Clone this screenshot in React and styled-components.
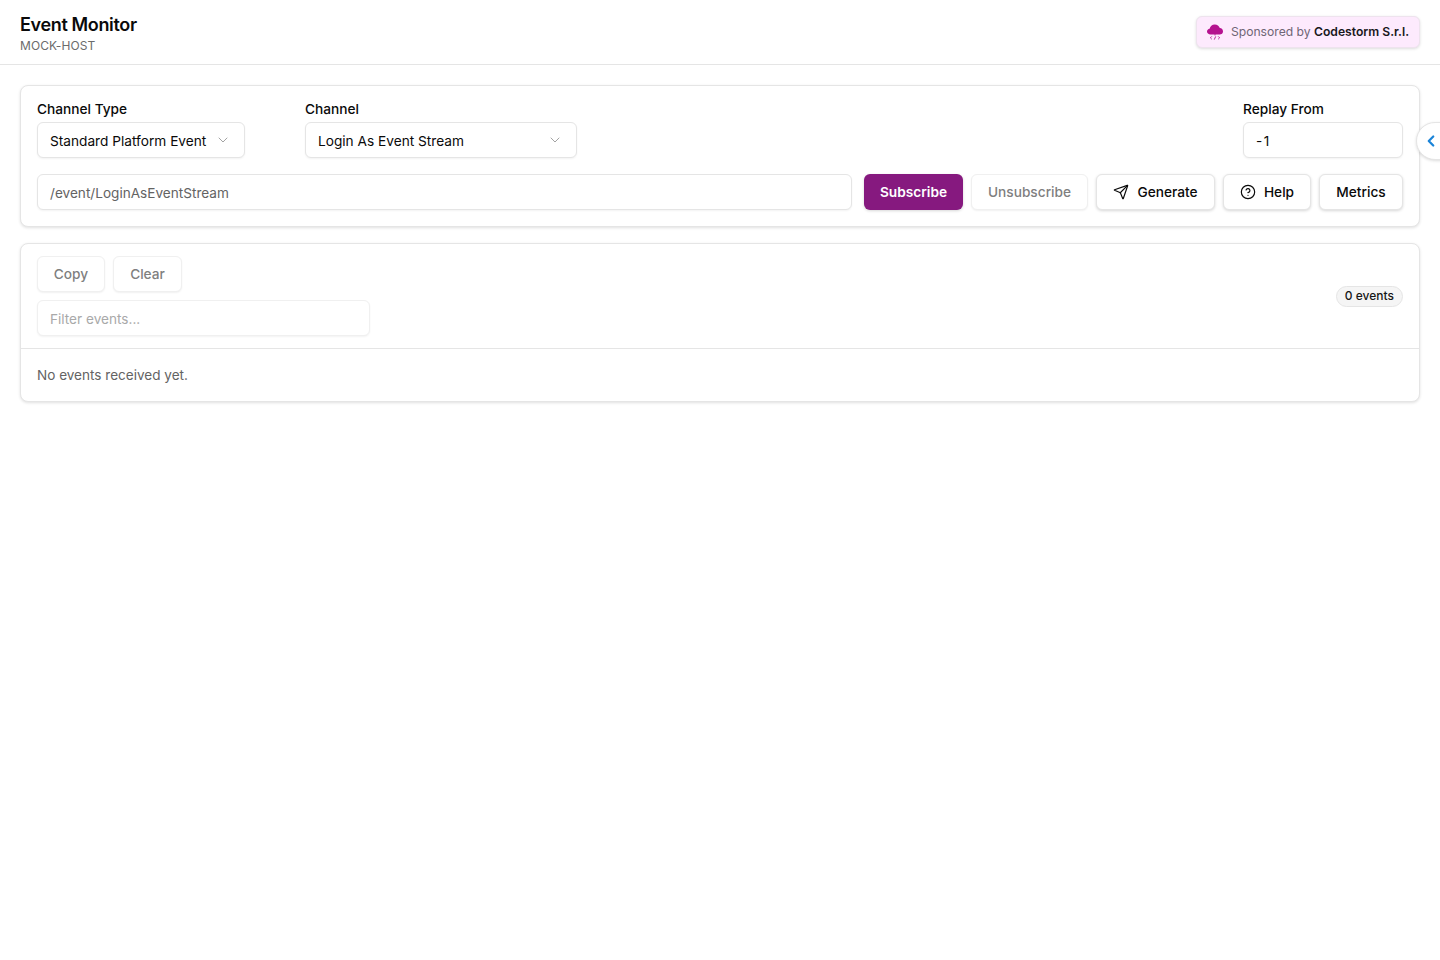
import styled, { createGlobalStyle } from "styled-components";
import { ChevronDown, ChevronLeft, CircleHelp, Send } from "lucide-react";

const GlobalStyle = createGlobalStyle`
  html, body {
    margin: 0;
    padding: 0;
    background: #fff;
    font-family: Inter, "Liberation Sans", sans-serif;
    color: #0a0a0a;
  }
  * { box-sizing: border-box; }
`;

const Page = styled.div`
  position: relative;
  height: 960px;
  overflow: hidden;
`;

const Header = styled.header`
  display: flex;
  justify-content: space-between;
  align-items: center;
  height: 65px;
  padding: 0 20px;
  border-bottom: 1px solid #e5e5e5;
`;

const Brand = styled.div`
  padding-top: 3px;
`;

const Title = styled.h1`
  margin: 0;
  font-size: 18px;
  line-height: 24px;
  font-weight: 600;
  letter-spacing: -0.35px;
`;

const Host = styled.div`
  margin-top: 1px;
  font-size: 12px;
  line-height: 16px;
  letter-spacing: 0.08px;
  color: #6b6b6b;
`;

const Sponsor = styled.a`
  display: flex;
  align-items: center;
  gap: 8px;
  height: 32px;
  padding: 0 10px;
  background: #fdeafd;
  border: 1px solid #eee3ee;
  border-radius: 6px;
  box-shadow: 0 1px 3px rgba(0, 0, 0, 0.14);
  font-size: 12.15px;
  color: #6f6675;
  white-space: nowrap;
  span {
    padding-bottom: 2px;
  }
  b {
    font-weight: 600;
    color: #18181b;
  }
`;

const Main = styled.main`
  display: flex;
  flex-direction: column;
  gap: 16px;
  padding: 20px;
`;

const Card = styled.section`
  background: #fff;
  border: 1px solid #e5e5e5;
  border-radius: 8px;
  box-shadow: 0 1px 3px rgba(0, 0, 0, 0.12);
`;

const Controls = styled.div`
  display: flex;
  flex-direction: column;
  gap: 16px;
  padding: 16px;
`;

const Row = styled.div`
  display: flex;
  align-items: flex-end;
  gap: ${(p) => p.$gap || 8}px;
`;

const Field = styled.div`
  display: flex;
  flex-direction: column;
  gap: 4px;
  width: ${(p) => p.$width}px;
  margin-left: ${(p) => p.$push || 0};
`;

const Label = styled.label`
  font-size: 13.7px;
  line-height: 14px;
  font-weight: 500;
  height: 16px;
`;

const Select = styled.div`
  display: flex;
  align-items: center;
  justify-content: space-between;
  height: 36px;
  padding: 1px 13px 0 12px;
  background: #fff;
  border: 1px solid #e5e5e5;
  border-radius: 6px;
  box-shadow: 0 1px 2px rgba(0, 0, 0, 0.05);
  font-size: 13.68px;
  svg {
    color: #a3a3a3;
    margin-top: -1px;
  }
`;

const Input = styled.div`
  display: flex;
  align-items: center;
  flex: ${(p) => (p.$grow ? 1 : "none")};
  width: ${(p) => (p.$width ? `${p.$width}px` : "auto")};
  height: 36px;
  padding: 1px 12px 0;
  background: #fff;
  border: 1px solid ${(p) => (p.$faded ? "#f0f0f0" : "#e5e5e5")};
  border-radius: 6px;
  box-shadow: 0 1px 2px rgba(0, 0, 0, 0.05);
  font-size: 13.6px;
  letter-spacing: ${(p) => p.$tracking || 0}px;
  color: ${(p) => p.$color || "#0a0a0a"};
`;

const Button = styled.button`
  display: inline-flex;
  align-items: center;
  justify-content: center;
  gap: 8px;
  flex: none;
  width: ${(p) => (p.$width ? `${p.$width}px` : "auto")};
  height: 36px;
  padding: 0 0 1px;
  background: #fff;
  border: 1px solid #e5e5e5;
  border-radius: 6px;
  box-shadow: 0 1px 3px rgba(0, 0, 0, 0.16);
  font-family: inherit;
  font-size: 13.7px;
  font-weight: 500;
  color: #0a0a0a;
  white-space: nowrap;
`;

const PrimaryButton = styled(Button)`
  border: 0;
  background: #86197f;
  color: #fff;
  font-weight: 600;
  margin-left: 4px;
`;

const DisabledButton = styled(Button)`
  border-color: #f0f0f0;
  box-shadow: 0 1px 2px rgba(0, 0, 0, 0.06);
  color: #7f7f7f;
`;

const EventsBar = styled.div`
  display: flex;
  justify-content: space-between;
  align-items: center;
  padding: 12px 16px;
  border-bottom: 1px solid #e5e5e5;
`;

const EventsTools = styled.div`
  display: flex;
  flex-direction: column;
  gap: 8px;
`;

const Badge = styled.span`
  display: inline-flex;
  align-items: center;
  height: 21px;
  padding: 0 8px 2px;
  background: #f5f5f5;
  border: 1px solid #e5e5e5;
  border-radius: 999px;
  font-size: 12px;
  font-weight: 500;
  color: #171717;
`;

const Empty = styled.div`
  padding: 18px 16px 17px;
  font-size: 13.55px;
  line-height: 17px;
  color: #636363;
`;

const SideTab = styled.button`
  position: absolute;
  top: 122px;
  left: 1416px;
  display: flex;
  align-items: center;
  width: 44px;
  height: 38px;
  padding: 0 0 0 5px;
  background: #fff;
  border: 1px solid #e5e5e5;
  border-radius: 19px 0 0 19px;
  box-shadow: 0 1px 3px rgba(0, 0, 0, 0.14);
  color: #1b84d8;
`;

function CloudLogo() {
  return (
    <svg width="16" height="16" viewBox="0 0 16 16" aria-hidden="true">
      <path
        fill="#b5128f"
        d="M3.6 10.4C1.5 10.4 0 9.2 0 7.5c0-1.5 1.1-2.6 2.6-2.8C3 2.4 5.1.4 7.8.4c2.4 0 4.4 1.5 5 3.7 1.9.2 3.2 1.6 3.2 3.3 0 1.8-1.4 3-3.4 3H8.4v1.2H7.6v-1.2H3.6z"
      />
      <path
        fill="none"
        stroke="#b5128f"
        strokeWidth="0.9"
        d="M4.8 12.4 3.4 13.8 4.8 15.2M11.2 12.4l1.4 1.4-1.4 1.4M8.7 12.4 7.3 15.6"
      />
    </svg>
  );
}

export default function App() {
  return (
    <Page>
      <GlobalStyle />
      <Header>
        <Brand>
          <Title>Event Monitor</Title>
          <Host>MOCK-HOST</Host>
        </Brand>
        <Sponsor>
          <CloudLogo />
          <span>
            Sponsored by <b>Codestorm S.r.l.</b>
          </span>
        </Sponsor>
      </Header>
      <Main>
        <Card>
          <Controls>
            <Row $gap={60}>
              <Field $width={208}>
                <Label>Channel Type</Label>
                <Select>
                  Standard Platform Event
                  <ChevronDown size={16} strokeWidth={1.5} />
                </Select>
              </Field>
              <Field $width={272}>
                <Label>Channel</Label>
                <Select>
                  Login As Event Stream
                  <ChevronDown size={16} strokeWidth={1.5} />
                </Select>
              </Field>
              <Field $width={160} $push="auto">
                <Label>Replay From</Label>
                <Input $tracking={1.4}>-1</Input>
              </Field>
            </Row>
            <Row>
              <Input $grow $color="#636363">/event/LoginAsEventStream</Input>
              <PrimaryButton $width={99}>Subscribe</PrimaryButton>
              <DisabledButton $width={117}>Unsubscribe</DisabledButton>
              <Button $width={119}>
                <Send size={16} strokeWidth={1.75} />
                Generate
              </Button>
              <Button $width={88}>
                <CircleHelp size={16} strokeWidth={1.75} />
                Help
              </Button>
              <Button $width={84}>Metrics</Button>
            </Row>
          </Controls>
        </Card>
        <Card>
          <EventsBar>
            <EventsTools>
              <Row>
                <DisabledButton $width={68}>Copy</DisabledButton>
                <DisabledButton $width={69}>Clear</DisabledButton>
              </Row>
              <Input $width={333} $faded $color="#a9a9a9">Filter events...</Input>
            </EventsTools>
            <Badge>0 events</Badge>
          </EventsBar>
          <Empty>No events received yet.</Empty>
        </Card>
      </Main>
      <SideTab aria-label="Open panel">
        <ChevronLeft size={18} strokeWidth={3} />
      </SideTab>
    </Page>
  );
}
